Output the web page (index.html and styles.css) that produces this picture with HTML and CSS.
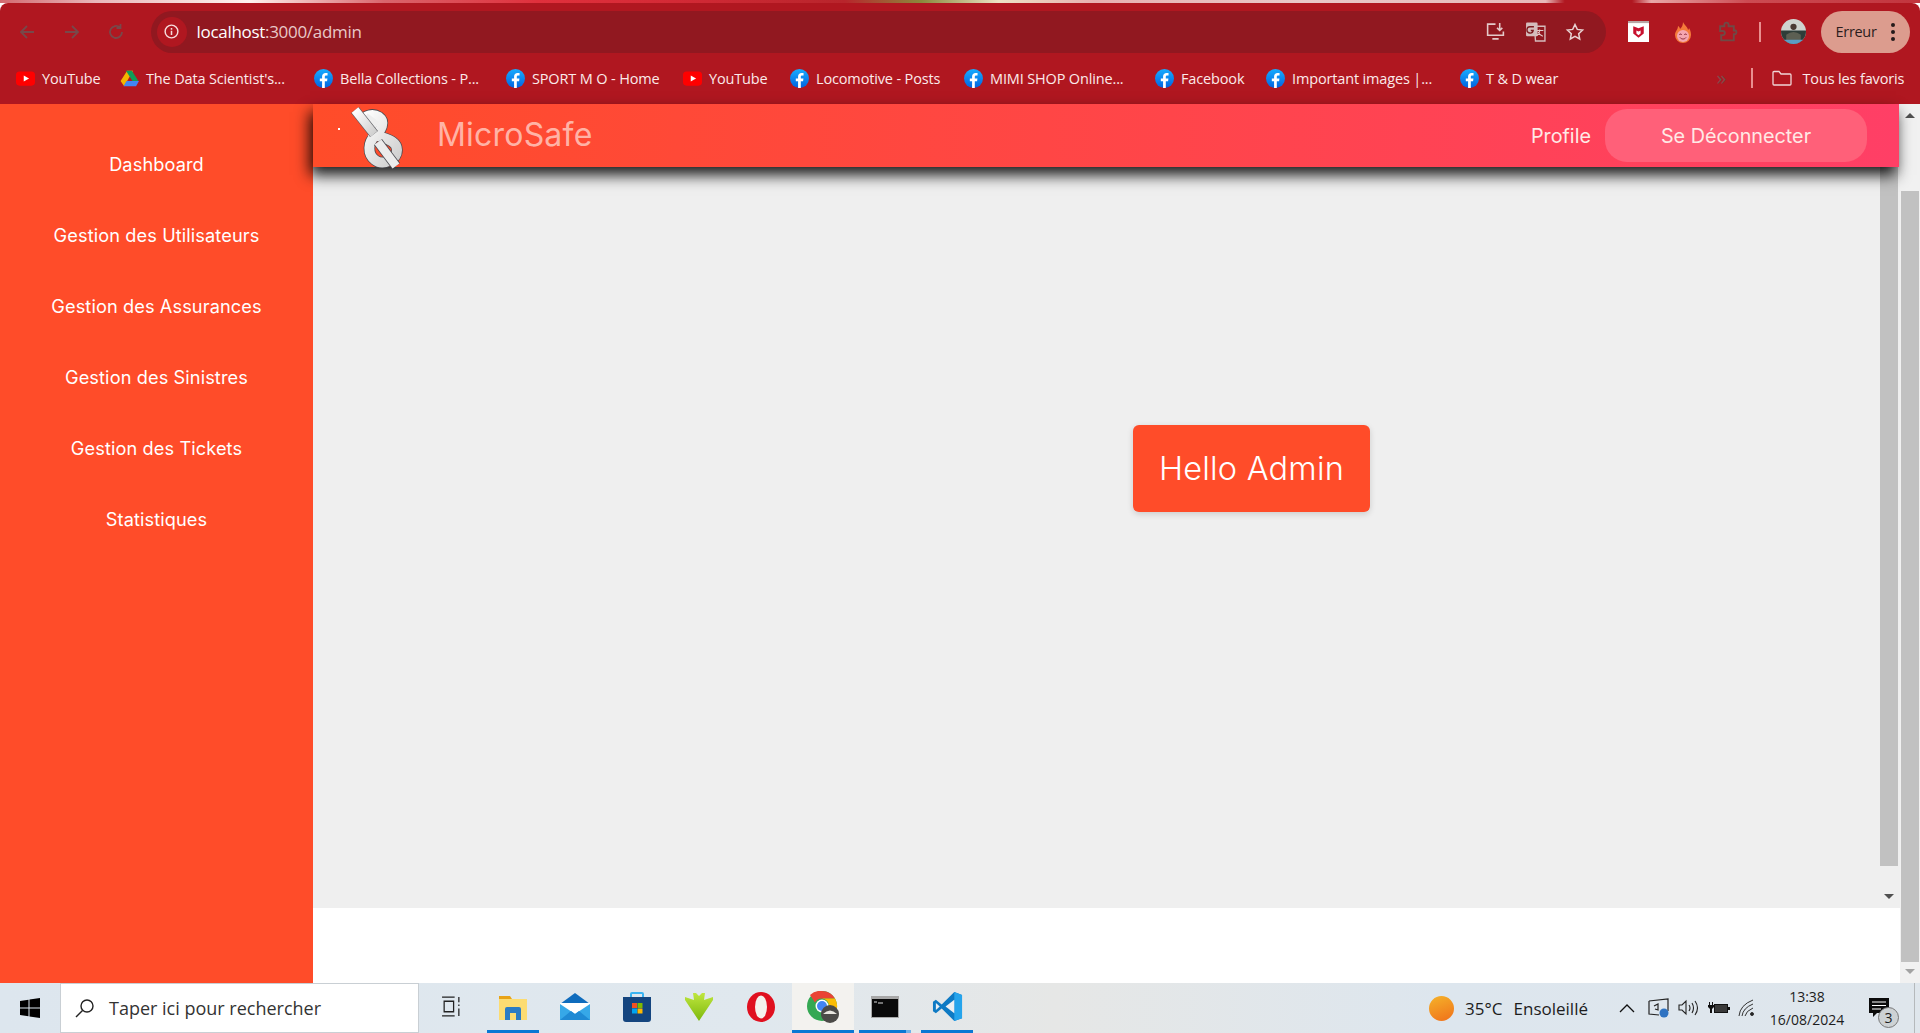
FILE: index.html
```html
<!DOCTYPE html>
<html lang="fr">
<head>
    <meta charset="UTF-8">
    <meta name="viewport" content="width=device-width, initial-scale=1.0">
    <title>MicroSafe</title>
    <link rel="stylesheet" href="styles.css">
</head>
<body>

    <!-- Symboles partagés -->
    <svg class="svg-defs" width="0" height="0">
        <defs>
            <linearGradient id="fbBlue" x1="0" y1="0" x2="0" y2="1"><stop offset="0" stop-color="#18acfe"/><stop offset="1" stop-color="#0163e0"/></linearGradient>
            <linearGradient id="rope" x1="0" y1="0" x2="1" y2="1"><stop offset="0" stop-color="#ffffff"/><stop offset="1" stop-color="#cfcfcf"/></linearGradient>
            <linearGradient id="greenArrow" x1="0" y1="0" x2="0" y2="1"><stop offset="0" stop-color="#bfe63f"/><stop offset="1" stop-color="#7db80c"/></linearGradient>
            <symbol id="fb" viewBox="0 0 16 16">
                <circle cx="8" cy="8" r="8" fill="url(#fbBlue)"/>
                <path d="M6.800 16v-5.600H4.900V8h1.900V6.300c0-2 1.200-3 2.900-3 .8 0 1.500.1 1.700.1v2h-1.200c-.9 0-1.100.5-1.100 1.100V8h2.200l-.3 2.400H9.100V16z" fill="#fff"/>
            </symbol>
        </defs>
    </svg>

    <!-- Bande du fond d'écran au-dessus de la fenêtre -->
    <div class="wallpaper-strip"></div>

    <!-- Barre d'adresse -->
    <div class="toolbar">
        <svg class="nav-icon" viewBox="0 0 20 20"><path d="M17 10H4M10 4l-6 6 6 6"/></svg>
        <svg class="nav-icon" viewBox="0 0 20 20"><path d="M3 10h13M10 4l6 6-6 6"/></svg>
        <svg class="nav-icon" viewBox="0 0 20 20"><path d="M16 10a6 6 0 1 1-2-4.500M14.500 2v4h-4"/></svg>
        <div class="omnibox">
            <span class="site-info">
                <svg viewBox="0 0 20 20" width="17" height="17"><circle cx="10" cy="10" r="7.500" fill="none" stroke="#f6dcdc" stroke-width="1.700"/><path d="M10 9v5M10 6v1.800" stroke="#f6dcdc" stroke-width="1.800"/></svg>
            </span>
            <span class="url"><b>localhost</b>:3000/admin</span>
            <div class="omnibox-actions">
                <svg viewBox="0 0 20 20" width="21" height="21" fill="none" stroke="#e4c9c9" stroke-width="1.500"><path d="M10 3H2.500v10.500h15V10M7 17h6M14 2v7M11.500 6.500 14 9l2.500-2.500"/></svg>
                <svg viewBox="0 0 20 20" width="21" height="21"><rect x="1" y="1.500" width="11" height="13" rx="1" fill="#d5bcbc"/><path d="M9 5h10v14H10z" fill="none" stroke="#d5bcbc" stroke-width="1.300"/><path d="M8.500 5.500H5a3 3 0 1 0 2.800 3.500H5.500" fill="none" stroke="#7d1a1f" stroke-width="1.300"/><path d="M11.500 9h6M14 8v1.500c-.3 2-1.500 3.500-3 4.500M12.500 10.500c.8 2 2.200 3 4.500 4" fill="none" stroke="#e4c9c9" stroke-width="1"/></svg>
                <svg viewBox="0 0 20 20" width="20" height="20" fill="none" stroke="#e8d2d2" stroke-width="1.500"><path d="m10 2.500 2.300 4.900 5.300.7-3.900 3.600 1 5.300-4.700-2.600-4.700 2.600 1-5.300L2.400 8.100l5.300-.7z"/></svg>
            </div>
        </div>
        <div class="extensions">
            <svg viewBox="0 0 20 20" width="21" height="21"><path d="M0 0h20v20H0z" fill="#fff"/><path d="M0 0h20v2H0z" fill="#b9a5a5"/><path d="M5 5l5 2 5-2v7l-5 4-5-4z" fill="#c8102e"/><path d="M8 9l2 1 2-1v3l-2 1.500L8 12z" fill="#fff"/></svg>
            <svg viewBox="0 0 20 20" width="20" height="22"><path d="M10 0c1 3 5 5 5 8 1-.5 1-2 1-2 2 3 2 6 2 7a8 8 0 0 1-16 0C2 9 5 8 5 4c1 .5 2 2 2 3 2-2 3-4 3-7z" fill="#f47a3a"/><circle cx="10" cy="14" r="6" fill="#f5a6b0"/><path d="M6.500 13a1 1 0 0 1 2 0M11.500 13a1 1 0 0 1 2 0M7 15.500c1.500 2 4.500 2 6 0" fill="none" stroke="#8a2a3a" stroke-width="1"/></svg>
            <svg viewBox="0 0 20 20" width="21" height="21" fill="none" stroke="#6f4a46" stroke-width="1.800"><path d="M3 5h4V3.500a2 2 0 0 1 4 0V5h5v4h1.500a2 2 0 0 1 0 3.500H16v6H4v-5h1.500a2 2 0 0 0 0-4H3z"/></svg>
            <span class="toolbar-sep"></span>
            <svg class="avatar" viewBox="0 0 24 24" width="25" height="25"><clipPath id="avatarClip"><circle cx="12" cy="12" r="12"/></clipPath><g clip-path="url(#avatarClip)"><path d="M0 0h24v24H0z" fill="#cfd3cf"/><path d="M0 11h24v13H0z" fill="#2f3d38"/><path d="M5 24v-9q7-5 14 0v9z" fill="#5c5f52"/><circle cx="12" cy="7.500" r="3" fill="#4a3a34"/><path d="M0 20h24v4H0z" fill="#5b9cc4"/></g></svg>
        </div>
        <div class="error-pill">
            <span>Erreur</span>
            <svg viewBox="0 0 6 20" width="6" height="20"><circle cx="3" cy="3" r="2" fill="#241a1a"/><circle cx="3" cy="10" r="2" fill="#241a1a"/><circle cx="3" cy="17" r="2" fill="#241a1a"/></svg>
        </div>
    </div>

    <!-- Favoris -->
    <div class="bookmarks">
        <div class="bookmark"><svg class="favicon" viewBox="0 0 16 16"><rect y="2" width="16" height="12" rx="3" fill="#f00"/><path d="M6.500 5.500v5L11 8z" fill="#fff"/></svg>YouTube</div>
        <div class="bookmark"><svg class="favicon" viewBox="0 0 16 16"><path d="M5.500 1.500h5L5.500 10 3 14.500 0 10z" fill="#f4b400" transform="translate(.5 0)"/><path d="M10.500 1.500 16 10h-5L5.500 1.500z" fill="#0f9d58" transform="translate(-.5 0)"/><path d="M3 14.500 5.500 10H16l-2.500 4.500z" fill="#4285f4"/></svg>The Data Scientist's...</div>
        <div class="bookmark"><svg class="favicon" viewBox="0 0 16 16"><use href="#fb"/></svg>Bella Collections - P...</div>
        <div class="bookmark"><svg class="favicon" viewBox="0 0 16 16"><use href="#fb"/></svg>SPORT M O - Home</div>
        <div class="bookmark"><svg class="favicon" viewBox="0 0 16 16"><rect y="2" width="16" height="12" rx="3" fill="#f00"/><path d="M6.500 5.500v5L11 8z" fill="#fff"/></svg>YouTube</div>
        <div class="bookmark"><svg class="favicon" viewBox="0 0 16 16"><use href="#fb"/></svg>Locomotive - Posts</div>
        <div class="bookmark"><svg class="favicon" viewBox="0 0 16 16"><use href="#fb"/></svg>MIMI SHOP Online...</div>
        <div class="bookmark"><svg class="favicon" viewBox="0 0 16 16"><use href="#fb"/></svg>Facebook</div>
        <div class="bookmark"><svg class="favicon" viewBox="0 0 16 16"><use href="#fb"/></svg>Important images |...</div>
        <div class="bookmark"><svg class="favicon" viewBox="0 0 16 16"><use href="#fb"/></svg>T &amp; D wear</div>
        <span class="more">»</span>
        <span class="bookmark-sep"></span>
        <div class="bookmark all-bookmarks">
            <svg viewBox="0 0 20 16" width="20" height="16" fill="none" stroke="#f0d6d6" stroke-width="1.300"><path d="M1 2.500a1 1 0 0 1 1-1h5l2 2.500h9a1 1 0 0 1 1 1v9a1 1 0 0 1-1 1H2a1 1 0 0 1-1-1z"/></svg>
            Tous les favoris
        </div>
    </div>

    <div class="app">
        <aside class="sidebar">
            <a class="side-link">Dashboard</a>
            <a class="side-link">Gestion des Utilisateurs</a>
            <a class="side-link">Gestion des Assurances</a>
            <a class="side-link">Gestion des Sinistres</a>
            <a class="side-link">Gestion des Tickets</a>
            <a class="side-link">Statistiques</a>
        </aside>

        <div class="page">
            <div class="frame">
                <header class="navbar">
                    <span class="logo-dot"></span>
                    <svg class="logo" viewBox="0 0 50 63" width="50" height="63">
                        <path d="M11 15C14 9 22 7 28 11 35 16 30 24 24 30 17 36 16 48 24 54 32 60 46 54 46 44 46 32 28 33 20 26" fill="none" stroke="#4a4a50" stroke-width="11.500"/>
                        <path d="M11 15C14 9 22 7 28 11 35 16 30 24 24 30 17 36 16 48 24 54 32 60 46 54 46 44 46 32 28 33 20 26" fill="none" stroke="url(#rope)" stroke-width="10"/>
                        <path d="M14 11 26 20" fill="none" stroke="#eeeeee" stroke-width="9"/>
                        <path d="M27 36 45 60" fill="none" stroke="#4a4a50" stroke-width="10"/>
                        <path d="M27 36 45 60" fill="none" stroke="#ececec" stroke-width="8.500"/>
                        <path d="M4 4 23 28" fill="none" stroke="#5a5a60" stroke-width="10"/>
                        <path d="M4 4 23 28" fill="none" stroke="url(#rope)" stroke-width="8.500"/>
                    </svg>
                    <span class="brand">MicroSafe</span>
                    <a class="nav-link">Profile</a>
                    <button class="logout">Se Déconnecter</button>
                </header>
                <div class="frame-body">
                    <main class="content">
                        <div class="hello">Hello Admin</div>
                    </main>
                    <div class="frame-scroll">
                        <div class="thumb"></div>
                        <span class="arrow-down"></span>
                    </div>
                </div>
            </div>
            <div class="frame-gap"></div>
        </div>

        <div class="window-scroll">
            <span class="arrow-up"></span>
            <div class="thumb"></div>
            <span class="arrow-down faded"></span>
        </div>
    </div>

    <!-- Barre des tâches -->
    <footer class="taskbar">
        <span class="start">
            <svg viewBox="0 0 20 20" width="20" height="20"><path d="M0 3l8.500-1.300V9.500H0zM9.500 1.500 20 0v9.500H9.500zM0 10.500h8.500v7.800L0 17zM9.500 10.500H20V20L9.500 18.500z" fill="#000"/></svg>
        </span>
        <div class="search">
            <svg viewBox="0 0 20 20" width="20" height="20" fill="none" stroke="#222" stroke-width="1.400"><circle cx="12" cy="8" r="6"/><path d="M7.500 12.500 1 19"/></svg>
            <span>Taper ici pour rechercher</span>
        </div>
        <div class="task-apps">
            <span class="task">
                <svg viewBox="0 0 20 20" width="21" height="21" fill="none" stroke="#222" stroke-width="1.200"><path d="M1 1h12M1 19h12M3 5h9v10H3zM17 1v5M17 8v1.500M17 12v7"/></svg>
            </span>
            <span class="task open">
                <svg viewBox="0 0 28 26" width="28" height="26"><path d="M0 2h11l2 3H0z" fill="#e8a317"/><path d="M0 5h28v21H0z" fill="#fcdc72"/><path d="M6 26V15q0-2 2-2h12q2 0 2 2v11h-5v-7h-6v7z" fill="#2b7cc4"/></svg>
            </span>
            <span class="task">
                <svg viewBox="0 0 30 30" width="30" height="30"><path d="M15 1 30 12v16H0V12z" fill="#0f6cbd"/><path d="M0 12h30v16H0z" fill="#36a8e8"/><path d="M0 12l15 10 15-10v-1H0z" fill="#fff"/><path d="M0 28l11-9 4 3 4-3 11 9z" fill="#1f8ad4"/></svg>
            </span>
            <span class="task">
                <svg viewBox="0 0 30 30" width="30" height="30"><path d="M9 5V2q0-1 1-1h10q1 0 1 1v3" fill="none" stroke="#3ab4f2" stroke-width="2"/><path d="M1 5h28v22q0 3-3 3H4q-3 0-3-3z" fill="#14457f"/><path d="M10 11h5v5h-5z" fill="#f25022"/><path d="M15.500 11h5v5h-5z" fill="#7fba00"/><path d="M10 16.500h5v5h-5z" fill="#00a4ef"/><path d="M15.500 16.500h5v5h-5z" fill="#ffb900"/></svg>
            </span>
            <span class="task">
                <svg viewBox="0 0 30 30" width="30" height="30"><path d="M9 1h3l3 3 3-3h3l-1 7 9-3v3L15 29 1 8V5l9 3z" fill="url(#greenArrow)"/></svg>
            </span>
            <span class="task">
                <svg viewBox="0 0 30 30" width="30" height="30"><ellipse cx="15" cy="15" rx="14" ry="15" fill="#e0101f"/><ellipse cx="15" cy="15" rx="6" ry="11.500" fill="#f4f1ec"/></svg>
            </span>
            <span class="task active">
                <svg viewBox="0 0 32 32" width="32" height="32"><circle cx="15" cy="15" r="15" fill="#34a853"/><path d="M15 0a15 15 0 0 1 13 7.500H15a7.500 7.500 0 0 0-7 4L3 4a15 15 0 0 1 12-4z" fill="#ea4335"/><path d="M28 7.500A15 15 0 0 1 27 24H17l5-9a7.500 7.500 0 0 0-7-7.500z" fill="#fbbc05"/><circle cx="15" cy="15" r="6.500" fill="#fff"/><circle cx="15" cy="15" r="5" fill="#4285f4"/><circle cx="23" cy="23" r="9" fill="#4b4a48"/><path d="M16 23q7-7 14 0z" fill="#e8e6e0"/></svg>
            </span>
            <span class="task open terminal">
                <svg viewBox="0 0 28 22" width="28" height="22"><rect width="28" height="22" fill="#a8a8a8"/><rect x="1" y="3" width="26" height="18" fill="#0a0a0a"/><path d="M3 6h3M7 7h5" stroke="#ddd"/></svg>
            </span>
            <span class="task open">
                <svg viewBox="0 0 32 32" width="31" height="31"><path d="M23 1 10 14 4 9 1 11v10l3 2 6-5 13 13 8-3V4z" fill="#0e7ac4"/><path d="M23 1l8 3v24l-8 3z" fill="#25a4ec"/><path d="M23 9l-9 7 9 7z" fill="#ecf0f4"/><path d="M4 12.500 8 16l-4 3.500z" fill="#ecf0f4"/></svg>
            </span>
        </div>
        <div class="tray">
            <span class="sun"></span>
            <span class="weather">35°C</span>
            <span class="weather-label">Ensoleillé</span>
            <svg class="chevron" viewBox="0 0 16 10" width="16" height="10" fill="none" stroke="#111" stroke-width="1.300"><path d="M1 9l7-7 7 7"/></svg>
            <svg viewBox="0 0 22 20" width="22" height="20" fill="none" stroke="#222" stroke-width="1.200"><path d="M1 3l19-2v12M1 3v13l10 1M6 8l4-2v6l-3-1"/><circle cx="16" cy="15" r="4.500" fill="#2f73c2" stroke="none"/></svg>
            <svg viewBox="0 0 22 18" width="22" height="18" fill="none" stroke="#222" stroke-width="1.100"><path d="M1 6h3l4-4v13l-4-4H1zM11 6q2 3 0 6M14 4q3 5 0 10M17 2q5 7 0 14"/></svg>
            <svg viewBox="0 0 22 16" width="22" height="16"><rect x="6.500" y="4.500" width="13" height="8" fill="#3a3a3a" stroke="#111"/><path d="M20 7h2v3h-2zM1 2h1v3H1zM4 2h1v3H4zM0 5h6v2l-2 2v4H2V9L0 7z" fill="#111"/></svg>
            <svg viewBox="0 0 18 18" width="18" height="18" fill="none" stroke="#333" stroke-width="1"><path d="M1 17Q2 6 15 1M4 17q1-8 11-12M7 17q1-5 8-8"/><circle cx="14" cy="15" r="1.500" fill="#222"/></svg>
            <div class="clock">
                <span>13:38</span>
                <span>16/08/2024</span>
            </div>
            <span class="notify">
                <svg viewBox="0 0 20 20" width="20" height="20"><path d="M0 0h20v15H8l-4 4v-4H0z" fill="#0b0b0b"/><path d="M3 4h14M3 7.500h14M3 11h9" stroke="#fff"/></svg>
                <span class="badge">3</span>
            </span>
            <span class="show-desktop"></span>
        </div>
    </footer>

</body>
</html>
```

FILE: styles.css
```css
* {
    box-sizing: border-box;
}

body {
    margin: 0;
    height: 1033px;
    display: flex;
    flex-direction: column;
    overflow: hidden;
    font-family: "Inter", "Liberation Sans", sans-serif;
    background: #fff;
}

.svg-defs {
    flex: none;
}

.wallpaper-strip {
    height: 3px;
    flex: none;
    background: linear-gradient(90deg, #d36a70 0%, #e9b7ba 5%, #fff3ee 13%, #d9656c 20%, #e0303c 28%, #d42a36 35%, #b8252c 44%, #8a8a3c 48%, #ede2c4 52%, #e8b0b0 57%, #eac8c8 68%, #e8b8b8 80.500%, #b01720 81.500%, #b01720 85%, #e8a8a8 86%, #cc4b52 91%, #c2353e 100%);
}

/* Barre d'adresse */
.toolbar {
    height: 57px;
    flex: none;
    display: flex;
    align-items: center;
    padding: 0 8px 0 17px;
    background: #b01720;
    border-radius: 8px 8px 0 0;
}

.nav-icon {
    width: 20px;
    height: 20px;
    margin-right: 24.500px;
    fill: none;
    stroke: #78484a;
    stroke-width: 1.800;
}

.omnibox {
    width: 1455px;
    height: 42px;
    flex: none;
    display: flex;
    align-items: center;
    background: #911820;
    border-radius: 21px;
}

.site-info {
    width: 30px;
    height: 30px;
    margin-left: 6px;
    display: flex;
    align-items: center;
    justify-content: center;
    background: #b01720;
    border-radius: 50%;
}

.url {
    margin-left: 10px;
    font-family: "Open Sans", sans-serif;
    font-size: 17px;
    letter-spacing: -0.3px;
    color: #e8c8c8;
}

.url b {
    font-weight: 400;
    color: #fff;
}

.omnibox-actions {
    margin-left: auto;
    margin-right: 21px;
    display: flex;
    align-items: center;
    gap: 19px;
}

.extensions {
    display: flex;
    align-items: center;
    margin-left: 22px;
    gap: 24px;
}

.toolbar-sep {
    width: 2px;
    height: 20px;
    margin: 0 -3px 0 -3px;
    background: #e98f8f;
}

.avatar {
    margin-left: -1px;
}

.error-pill {
    width: 89px;
    height: 42px;
    margin-left: 15px;
    display: flex;
    align-items: center;
    justify-content: space-between;
    padding: 0 14px 0 15px;
    background: #dc9c8e;
    border-radius: 21px;
    font-family: "Open Sans", sans-serif;
    font-size: 14.500px;
    letter-spacing: -0.3px;
    color: #2b1d1d;
}

/* Favoris */
.bookmarks {
    height: 44px;
    flex: none;
    display: grid;
    grid-template-columns: 104px 194px 192px 177px 107px 174px 191px 111px 194px 257px 34px 21px auto;
    align-items: center;
    padding: 0 0 8px 15.500px;
    background: #b01720;
    font-family: "Open Sans", sans-serif;
    font-size: 14.500px;
    letter-spacing: -0.15px;
    color: #fbeaea;
}

.bookmark {
    display: flex;
    align-items: center;
    gap: 7.500px;
    white-space: nowrap;
}

.favicon {
    width: 19px;
    height: 19px;
    flex: none;
}

.more {
    font-size: 20px;
    line-height: 1;
    color: #7d4a4a;
}

.bookmark-sep {
    width: 2px;
    height: 20px;
    background: #e98f8f;
}

.all-bookmarks {
    gap: 11px;
}

/* Application */
.app {
    flex: 1;
    min-height: 0;
    display: flex;
}

.sidebar {
    width: 313px;
    flex: none;
    padding-top: 24px;
    background: #ff4c29;
}

.side-link {
    height: 71px;
    display: flex;
    align-items: center;
    justify-content: center;
    font-size: 18.200px;
    font-weight: 400;
    color: #fff;
    letter-spacing: 0.1px;
}

.page {
    flex: 1;
    min-width: 0;
    display: flex;
    flex-direction: column;
}

.frame {
    height: 804px;
    flex: none;
    display: flex;
    flex-direction: column;
    background: #efefef;
}

.frame-gap {
    flex: 1;
    background: #fff;
}

.navbar {
    height: 63px;
    flex: none;
    position: relative;
    z-index: 2;
    display: flex;
    align-items: center;
    margin-right: 1px;
    background: linear-gradient(90deg, #ff4c29, #ff3f66);
    box-shadow: -3px 8px 14px rgba(0, 0, 0, 0.9);
}

.logo-dot {
    width: 2px;
    height: 2px;
    margin-left: 25px;
    margin-bottom: 13px;
    background: #fff;
}

.logo {
    margin-left: 11px;
    margin-top: 4px;
    flex: none;
    overflow: visible;
}

.brand {
    margin: 0 0 2px 36px;
    font-size: 32px;
    font-weight: 400;
    color: #ffb3a6;
    letter-spacing: 0.2px;
}

.nav-link {
    margin-left: auto;
    font-size: 19.800px;
    color: #ffe9e6;
}

.logout {
    width: 262px;
    height: 53px;
    margin: 0 32px 0 14px;
    border: none;
    border-radius: 22px;
    background: #ff6079;
    font-family: inherit;
    font-size: 19.800px;
    color: #ffe9e6;
}

.frame-body {
    flex: 1;
    min-height: 0;
    display: flex;
}

.content {
    flex: 1;
    padding: 258px 0 0 820px;
}

.hello {
    width: 237px;
    height: 87px;
    display: flex;
    align-items: center;
    justify-content: center;
    background: #ff4c29;
    border-radius: 6px;
    box-shadow: 0 2px 6px rgba(0, 0, 0, 0.15);
    font-size: 32.500px;
    font-weight: 300;
    color: #fff;
    letter-spacing: 0.2px;
}

/* Barres de défilement */
.frame-scroll {
    width: 20px;
    flex: none;
    display: flex;
    flex-direction: column;
    align-items: center;
    background: #efefef;
}

.frame-scroll .thumb {
    width: 18px;
    height: 699px;
    margin-right: 2px;
    background: #c1c1c1;
}

.window-scroll {
    width: 20px;
    flex: none;
    display: flex;
    flex-direction: column;
    align-items: center;
    padding-top: 9px;
    background: #f1f1f1;
}

.window-scroll .thumb {
    width: 18px;
    height: 771px;
    margin-top: 73px;
    background: #c1c1c1;
}

.arrow-up {
    width: 0;
    height: 0;
    border-left: 5px solid transparent;
    border-right: 5px solid transparent;
    border-bottom: 5px solid #505050;
}

.arrow-down {
    width: 0;
    height: 0;
    margin: 28px 2px 0 0;
    border-left: 5px solid transparent;
    border-right: 5px solid transparent;
    border-top: 5px solid #505050;
}

.arrow-down.faded {
    margin: 7px 0 0 0;
    border-top-color: #a3a3a3;
}

/* Barre des tâches */
.taskbar {
    height: 50px;
    flex: none;
    display: flex;
    align-items: stretch;
    background: linear-gradient(90deg, #dde6ee, #e0e8ee 40%, #e6e7e6 55%, #dde6ee 75%, #dfe6ec);
    font-family: "Open Sans", sans-serif;
    color: #1d1d1d;
}

.start {
    width: 60px;
    display: flex;
    align-items: center;
    justify-content: center;
}

.search {
    width: 359px;
    display: flex;
    align-items: center;
    gap: 14px;
    padding-left: 14px;
    background: #fff;
    border: 1px solid #c9cfd4;
    font-size: 18px;
    color: #333;
}

.task-apps {
    display: flex;
    margin-left: 1px;
}

.task {
    width: 52px;
    margin: 0 5px;
    display: flex;
    align-items: center;
    justify-content: center;
    border-bottom: 3px solid transparent;
}

.task.open {
    border-bottom-color: #0a78d4;
}

.task.terminal {
    border-image: linear-gradient(90deg, #0a78d4 88%, #6fb1e8 88%) 1;
}

.task.active {
    width: 62px;
    margin: 0;
    background: #f3f2ef;
    border-bottom-color: #0a78d4;
}

.tray {
    margin-left: auto;
    display: flex;
    align-items: center;
    gap: 8px;
    font-size: 17px;
}

.sun {
    width: 25px;
    height: 25px;
    margin-right: 3px;
    border-radius: 50%;
    background: linear-gradient(160deg, #f5b32a, #f0701a);
}

.weather-label {
    margin: 0 23px 0 3px;
}

.chevron {
    margin-right: 5px;
}

.clock {
    width: 82px;
    margin-left: 2px;
    display: flex;
    flex-direction: column;
    align-items: center;
    font-size: 14px;
    line-height: 23px;
}

.notify {
    position: relative;
    margin: 0 17px 0 13px;
    display: flex;
}

.badge {
    position: absolute;
    left: 9px;
    top: 9px;
    width: 21px;
    height: 21px;
    display: flex;
    align-items: center;
    justify-content: center;
    border-radius: 50%;
    border: 1px solid #777;
    background: #cdd2d4;
    font-size: 14px;
}

.show-desktop {
    width: 6px;
    height: 100%;
    border-left: 1px solid #b5b9bb;
}
```
